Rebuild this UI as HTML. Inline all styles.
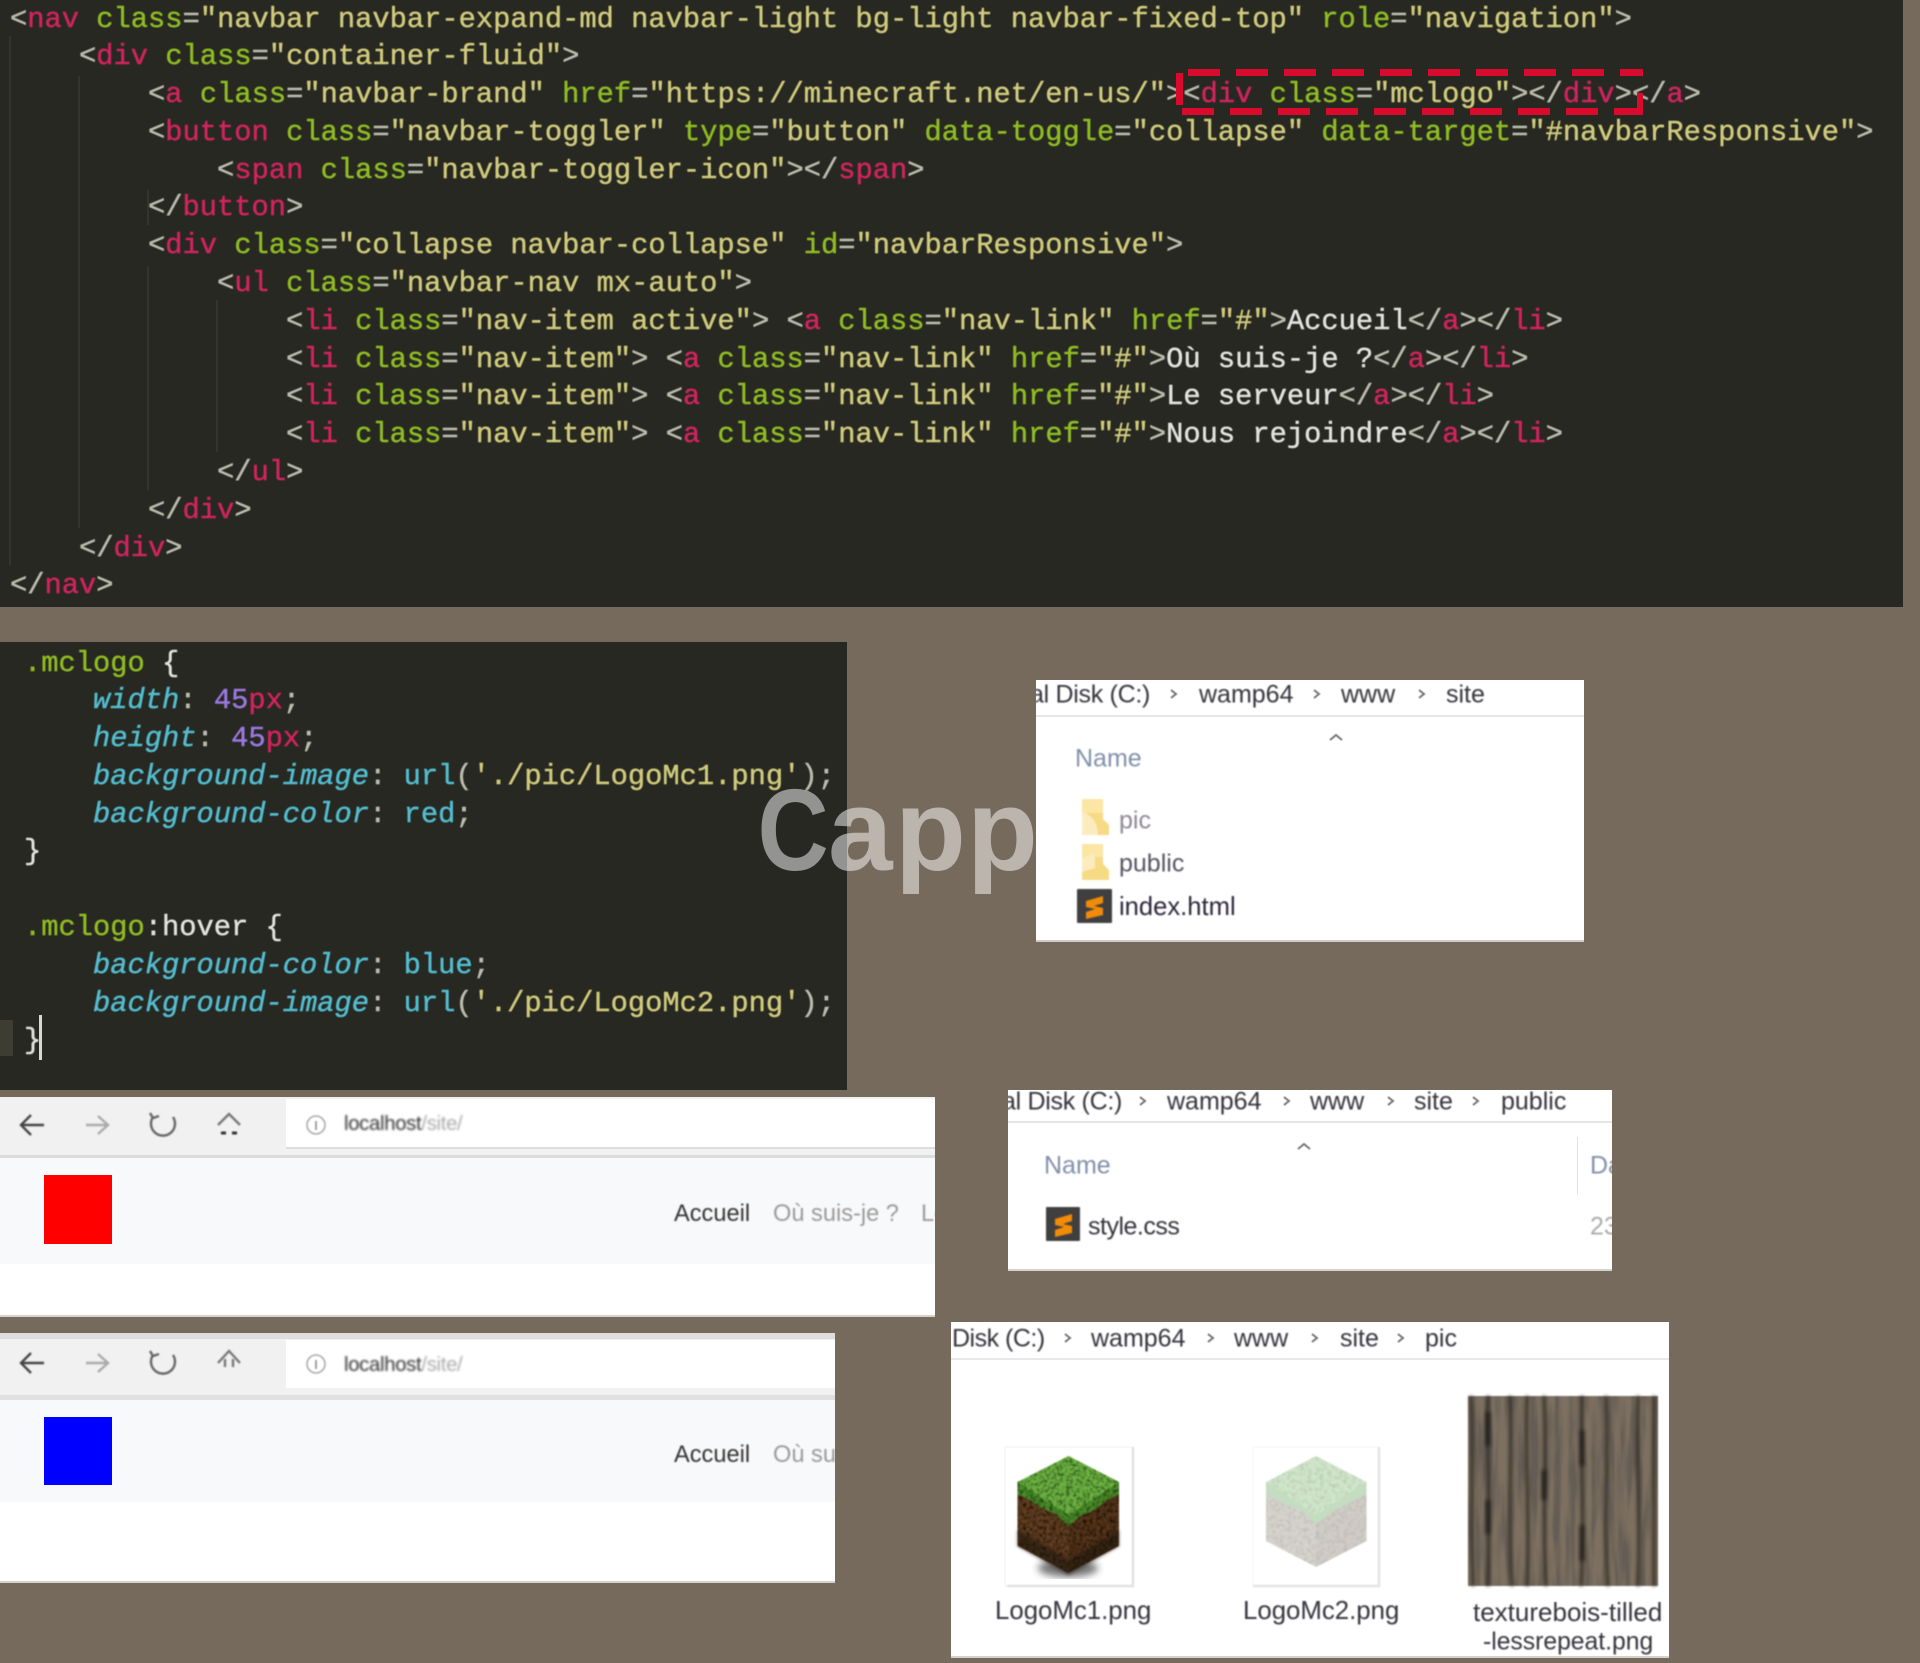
<!DOCTYPE html>
<html><head><meta charset="utf-8"><title>Navbar Minecraft</title>
<style>
html,body{margin:0;padding:0;background:#766a5c}
#r{position:relative;width:1920px;height:1663px;overflow:hidden;background:#766a5c;font-family:"Liberation Sans",sans-serif}
.b{position:absolute}
pre{position:absolute;margin:0;font:28.75px/37.8px "Liberation Mono",monospace;color:#cfcfc8;filter:blur(.6px);-webkit-text-stroke:.45px currentColor}
i.g{font-style:normal;color:#d0245f}
i.a{font-style:normal;color:#8fbc24}
i.s{font-style:normal;color:#d0ca7c}
i.e{font-style:normal;color:#bcbcae}
i.w{font-style:normal;color:#e2e2dc}
i.c{font-style:italic;color:#53bccf}
i.u{font-style:normal;color:#53bccf}
i.n{font-style:normal;color:#9a78e0}
i.k{font-style:normal;color:#8fbb22}
.t{position:absolute;white-space:nowrap;line-height:1;transform:translateY(calc(-50% + 1px));font-size:25px;color:#33333b;filter:blur(.7px)}
.m{color:#7f8ea8}
.clip{position:absolute;overflow:hidden}
.nav{font-size:23.6px;filter:blur(.8px)}
.url{font-size:20.3px;filter:blur(1px);color:#333;letter-spacing:-.3px}
.url span{color:#aaa}
</style></head><body><div id="r">

<div class="b" style="left:0;top:0;width:1903px;height:607px;background:#272822"></div>
<svg class="b" style="left:0;top:0" width="1903" height="607">
<g stroke="#33342d" stroke-width="2">
<path d="M10 36V566M79 76V528M148 190V225M148 266V490M217 300V452"/></g></svg>
<pre style="left:10px;top:.5px"><i class="e">&lt;</i><i class="g">nav</i> <i class="a">class</i><i class="e">=</i><i class="s">"navbar navbar-expand-md navbar-light bg-light navbar-fixed-top"</i> <i class="a">role</i><i class="e">=</i><i class="s">"navigation"</i><i class="e">&gt;</i>
    <i class="e">&lt;</i><i class="g">div</i> <i class="a">class</i><i class="e">=</i><i class="s">"container-fluid"</i><i class="e">&gt;</i>
        <i class="e">&lt;</i><i class="g">a</i> <i class="a">class</i><i class="e">=</i><i class="s">"navbar-brand"</i> <i class="a">href</i><i class="e">=</i><i class="s">"https://minecraft.net/en-us/"</i><i class="e">&gt;&lt;</i><i class="g">div</i> <i class="a">class</i><i class="e">=</i><i class="s">"mclogo"</i><i class="e">&gt;&lt;/</i><i class="g">div</i><i class="e">&gt;&lt;/</i><i class="g">a</i><i class="e">&gt;</i>
        <i class="e">&lt;</i><i class="g">button</i> <i class="a">class</i><i class="e">=</i><i class="s">"navbar-toggler"</i> <i class="a">type</i><i class="e">=</i><i class="s">"button"</i> <i class="a">data-toggle</i><i class="e">=</i><i class="s">"collapse"</i> <i class="a">data-target</i><i class="e">=</i><i class="s">"#navbarResponsive"</i><i class="e">&gt;</i>
            <i class="e">&lt;</i><i class="g">span</i> <i class="a">class</i><i class="e">=</i><i class="s">"navbar-toggler-icon"</i><i class="e">&gt;&lt;/</i><i class="g">span</i><i class="e">&gt;</i>
        <i class="e">&lt;/</i><i class="g">button</i><i class="e">&gt;</i>
        <i class="e">&lt;</i><i class="g">div</i> <i class="a">class</i><i class="e">=</i><i class="s">"collapse navbar-collapse"</i> <i class="a">id</i><i class="e">=</i><i class="s">"navbarResponsive"</i><i class="e">&gt;</i>
            <i class="e">&lt;</i><i class="g">ul</i> <i class="a">class</i><i class="e">=</i><i class="s">"navbar-nav mx-auto"</i><i class="e">&gt;</i>
                <i class="e">&lt;</i><i class="g">li</i> <i class="a">class</i><i class="e">=</i><i class="s">"nav-item active"</i><i class="e">&gt;</i> <i class="e">&lt;</i><i class="g">a</i> <i class="a">class</i><i class="e">=</i><i class="s">"nav-link"</i> <i class="a">href</i><i class="e">=</i><i class="s">"#"</i><i class="e">&gt;</i><i class="w">Accueil</i><i class="e">&lt;/</i><i class="g">a</i><i class="e">&gt;&lt;/</i><i class="g">li</i><i class="e">&gt;</i>
                <i class="e">&lt;</i><i class="g">li</i> <i class="a">class</i><i class="e">=</i><i class="s">"nav-item"</i><i class="e">&gt;</i> <i class="e">&lt;</i><i class="g">a</i> <i class="a">class</i><i class="e">=</i><i class="s">"nav-link"</i> <i class="a">href</i><i class="e">=</i><i class="s">"#"</i><i class="e">&gt;</i><i class="w">Où suis-je ?</i><i class="e">&lt;/</i><i class="g">a</i><i class="e">&gt;&lt;/</i><i class="g">li</i><i class="e">&gt;</i>
                <i class="e">&lt;</i><i class="g">li</i> <i class="a">class</i><i class="e">=</i><i class="s">"nav-item"</i><i class="e">&gt;</i> <i class="e">&lt;</i><i class="g">a</i> <i class="a">class</i><i class="e">=</i><i class="s">"nav-link"</i> <i class="a">href</i><i class="e">=</i><i class="s">"#"</i><i class="e">&gt;</i><i class="w">Le serveur</i><i class="e">&lt;/</i><i class="g">a</i><i class="e">&gt;&lt;/</i><i class="g">li</i><i class="e">&gt;</i>
                <i class="e">&lt;</i><i class="g">li</i> <i class="a">class</i><i class="e">=</i><i class="s">"nav-item"</i><i class="e">&gt;</i> <i class="e">&lt;</i><i class="g">a</i> <i class="a">class</i><i class="e">=</i><i class="s">"nav-link"</i> <i class="a">href</i><i class="e">=</i><i class="s">"#"</i><i class="e">&gt;</i><i class="w">Nous rejoindre</i><i class="e">&lt;/</i><i class="g">a</i><i class="e">&gt;&lt;/</i><i class="g">li</i><i class="e">&gt;</i>
            <i class="e">&lt;/</i><i class="g">ul</i><i class="e">&gt;</i>
        <i class="e">&lt;/</i><i class="g">div</i><i class="e">&gt;</i>
    <i class="e">&lt;/</i><i class="g">div</i><i class="e">&gt;</i>
<i class="e">&lt;/</i><i class="g">nav</i><i class="e">&gt;</i></pre>

<svg class="b" style="left:0;top:0" width="1903" height="130" fill="#d90a2c">
<path d="M1188 69h32v7h-32zM1236 69h32v7h-32zM1284 69h32v7h-32zM1332 69h32v7h-32zM1380 69h32v7h-32zM1428 69h32v7h-32zM1476 69h32v7h-32zM1524 69h32v7h-32zM1572 69h32v7h-32zM1620 69h23v7h-23z"/>
<path d="M1182 108h32v7h-32zM1230 108h32v7h-32zM1278 108h32v7h-32zM1326 108h32v7h-32zM1374 108h32v7h-32zM1422 108h32v7h-32zM1470 108h32v7h-32zM1518 108h32v7h-32zM1566 108h32v7h-32zM1614 108h29v7h-29z"/>
<path d="M1176 73h7v32h-7zM1637 93h6v22h-6z"/></svg>

<div class="b" style="left:0;top:642px;width:847px;height:448px;background:#272822"></div>
<div class="b" style="left:0;top:1020px;width:13px;height:36px;background:#3e3d32"></div>
<div class="b" style="left:39px;top:1015px;width:3px;height:45px;background:#d8d8d0"></div>
<pre style="left:24px;top:644.5px"><i class="k">.mclogo</i> <i class="w">{</i>
    <i class="c">width</i><i class="e">:</i> <i class="n">45</i><i class="g">px</i><i class="e">;</i>
    <i class="c">height</i><i class="e">:</i> <i class="n">45</i><i class="g">px</i><i class="e">;</i>
    <i class="c">background-image</i><i class="e">:</i> <i class="u">url</i><i class="e">(</i><i class="s">'./pic/LogoMc1.png'</i><i class="e">);</i>
    <i class="c">background-color</i><i class="e">:</i> <i class="u">red</i><i class="e">;</i>
<i class="w">}</i>

<i class="k">.mclogo</i><i class="w">:hover {</i>
    <i class="c">background-color</i><i class="e">:</i> <i class="u">blue</i><i class="e">;</i>
    <i class="c">background-image</i><i class="e">:</i> <i class="u">url</i><i class="e">(</i><i class="s">'./pic/LogoMc2.png'</i><i class="e">);</i>
<i class="w">}</i></pre>

<!-- explorer 1 -->
<div class="clip" style="left:1036px;top:680px;width:548px;height:262px;background:#fff;box-shadow:inset 0 -2px 0 #cfcbc6">
<div class="b" style="left:0;top:35px;width:548px;height:2px;background:#e6e6e6"></div>
</div>
<div class="clip" style="left:1036px;top:680px;width:548px;height:36px">
<span class="t" style="left:-6px;top:14px;letter-spacing:-.3px">al Disk (C:)</span>
<span class="t" style="left:163px;top:14px">wamp64</span>
<span class="t" style="left:305px;top:14px">www</span>
<span class="t" style="left:410px;top:14px">site</span>
</div>
<svg class="b" style="left:1036px;top:680px;filter:blur(.6px)" width="548" height="100" fill="none" stroke="#777" stroke-width="2">
<path d="M135 10l5 4-5 4M278 10l5 4-5 4M383 10l5 4-5 4M294 60l6-5 6 5"/></svg>
<span class="t m" style="left:1075px;top:758px">Name</span>
<svg class="b" style="left:1077px;top:795px;filter:blur(.7px)" width="40" height="132">
<path d="M5 4H26V24L32 30V40H5Z" fill="#f6da84"/><path d="M5 4H26V18H5Z" fill="#fbe6a4"/>
<path d="M5 17C14 19 21 28 21 40H5Z" fill="#fbecc0"/>
<path d="M5 49H26V69L32 75V85H5Z" fill="#f6da84"/><path d="M5 49H26V62H5Z" fill="#fbe6a4"/>
<path d="M5 63L18 58V73L5 77Z" fill="#fbecc0"/>
<rect x="0" y="94" width="35" height="34" rx="1" fill="#3f3f3f"/>
<path d="M9 106L26 101V108L17 111L26 113V120L9 124V117L18 114L9 112Z" fill="#f28c08"/>
</svg>
<span class="t" style="left:1119px;top:820px;color:#8c8794">pic</span>
<span class="t" style="left:1119px;top:863px;color:#555260">public</span>
<span class="t" style="left:1119px;top:907px;color:#2a2438;font-size:25.6px">index.html</span>

<!-- explorer 2 -->
<div class="b" style="left:1008px;top:1090px;width:604px;height:181px;background:#fff;box-shadow:inset 0 -2px 0 #d5d2cd">
<div class="b" style="left:0;top:31px;width:604px;height:2px;background:#e6e6e6"></div>
<div class="b" style="left:569px;top:47px;width:1px;height:58px;background:#e2e2e2"></div>
</div>
<div class="clip" style="left:1008px;top:1090px;width:604px;height:31px">
<span class="t" style="left:-6px;top:11px;letter-spacing:-.3px">al Disk (C:)</span>
<span class="t" style="left:159px;top:11px">wamp64</span>
<span class="t" style="left:302px;top:11px">www</span>
<span class="t" style="left:406px;top:11px">site</span>
<span class="t" style="left:493px;top:11px">public</span>
</div>
<svg class="b" style="left:1008px;top:1090px;filter:blur(.6px)" width="604" height="80" fill="none" stroke="#777" stroke-width="2">
<path d="M132 7l5 4-5 4M276 7l5 4-5 4M380 7l5 4-5 4M465 7l5 4-5 4M290 59l6-5 6 5"/></svg>
<span class="t m" style="left:1044px;top:1165px">Name</span>
<div class="clip" style="left:1585px;top:1150px;width:27px;height:90px">
<span class="t m" style="left:5px;top:15px">Da</span>
<span class="t" style="left:5px;top:76px;color:#aaa">23</span>
</div>
<svg class="b" style="left:1046px;top:1207px;filter:blur(.7px)" width="36" height="36">
<rect x="0" y="0" width="34" height="34" rx="1" fill="#3f3f3f"/>
<path d="M9 12L26 7V14L17 17L26 19V26L9 30V23L18 20L9 18Z" fill="#f28c08"/></svg>
<span class="t" style="left:1088px;top:1226px;letter-spacing:-.5px">style.css</span>

<!-- explorer 3 -->
<div class="b" style="left:951px;top:1322px;width:718px;height:336px;background:#fff;box-shadow:inset 0 -2px 0 #d5d2cd">
<div class="b" style="left:0;top:36px;width:718px;height:2px;background:#e8e8e8"></div>
</div>
<div class="clip" style="left:951px;top:1322px;width:718px;height:36px">
<span class="t" style="left:1px;top:16px;letter-spacing:-.5px">Disk (C:)</span>
<span class="t" style="left:140px;top:16px">wamp64</span>
<span class="t" style="left:283px;top:16px">www</span>
<span class="t" style="left:389px;top:16px">site</span>
<span class="t" style="left:474px;top:16px">pic</span>
</div>
<svg class="b" style="left:951px;top:1322px;filter:blur(.6px)" width="718" height="36" fill="none" stroke="#777" stroke-width="2">
<path d="M114 12l5 4-5 4M257 12l5 4-5 4M361 12l5 4-5 4M447 12l5 4-5 4"/></svg>

<svg class="b" style="left:951px;top:1322px" width="718" height="336" viewBox="951 1322 718 336">
<defs>
<filter id="n" x="0" y="0" width="100%" height="100%">
<feTurbulence type="fractalNoise" baseFrequency=".3" numOctaves="2" seed="4"/>
<feColorMatrix values="0 0 0 0 0 0 0 0 0 0 0 0 0 0 0 0 0 0 2.2 -.85" result="a"/>
<feComposite in="a" in2="SourceGraphic" operator="in" result="b"/>
<feMerge><feMergeNode in="SourceGraphic"/><feMergeNode in="b"/></feMerge>
</filter>
<filter id="nl" x="0" y="0" width="100%" height="100%">
<feTurbulence type="fractalNoise" baseFrequency=".25" numOctaves="2" seed="9"/>
<feColorMatrix values="0 0 0 0 .4 0 0 0 0 .38 0 0 0 0 .36 0 0 0 1.2 -.5" result="a"/>
<feComposite in="a" in2="SourceGraphic" operator="in" result="b"/>
<feMerge><feMergeNode in="SourceGraphic"/><feMergeNode in="b"/></feMerge>
</filter>
<filter id="wd" x="0" y="0" width="100%" height="100%">
<feTurbulence type="fractalNoise" baseFrequency=".13 .012" numOctaves="3" seed="8"/>
<feColorMatrix values="0 0 0 0 .13 0 0 0 0 .11 0 0 0 0 .09 0 0 0 3.4 -1.35" result="a"/>
<feComposite in="a" in2="SourceGraphic" operator="in" result="b"/>
<feMerge><feMergeNode in="SourceGraphic"/><feMergeNode in="b"/></feMerge>
</filter>
<filter id="bl"><feGaussianBlur stdDeviation="1.6"/></filter>
<filter id="bs"><feGaussianBlur stdDeviation="4"/></filter>
<filter id="b1"><feGaussianBlur stdDeviation=".7"/></filter>
</defs>
<!-- thumbs -->
<path d="M1005 1447H1133V1586H1005Z" fill="none" stroke="#f2f2f2" stroke-width="1"/>
<path d="M1253 1447H1379V1586H1253Z" fill="none" stroke="#f4f4f4" stroke-width="1"/>
<path d="M1133 1447V1586H1007" fill="none" stroke="#e2e2e2" stroke-width="2.5" filter="url(#b1)"/>
<path d="M1379 1447V1586H1253" fill="none" stroke="#e4e4e4" stroke-width="2.5" filter="url(#b1)"/>
<!-- grass block -->
<ellipse cx="1068" cy="1568" rx="30" ry="9" fill="#000" opacity=".55" filter="url(#bs)"/>
<g filter="url(#b1)">
<path d="M1017.5 1482L1068.5 1515V1573L1017.5 1546Z" fill="#5e3c22" filter="url(#n)"/>
<path d="M1119 1482L1068.5 1515V1573L1119 1546Z" fill="#52341d" filter="url(#n)"/>
<path d="M1017.5 1530L1068.5 1560V1575L1017.5 1546Z" fill="#1c120a" opacity=".6" filter="url(#bl)"/>
<path d="M1119 1530L1068.5 1560V1575L1119 1546Z" fill="#1c120a" opacity=".6" filter="url(#bl)"/>
<path d="M1017.5 1482V1494L1030 1500L1042 1508L1056 1514L1068.5 1526L1080 1516L1094 1510L1107 1500L1119 1494V1482Z" fill="#4a8a2c" filter="url(#n)"/>
<path d="M1068.5 1456L1119 1482L1068.5 1515L1017.5 1482Z" fill="#6cb242" filter="url(#n)"/>
</g>
<!-- pale block -->
<g filter="url(#b1)">
<path d="M1266 1482L1316 1515V1567L1266 1541Z" fill="#d6d2cc" filter="url(#nl)"/>
<path d="M1366.5 1482L1316 1515V1567L1366.5 1541Z" fill="#d0ccc6" filter="url(#nl)"/>
<path d="M1266 1482V1494L1285 1504L1300 1510L1316 1524L1335 1510L1350 1503L1366.5 1494V1482Z" fill="#c4dcc0"/>
<path d="M1316 1456L1366.5 1482L1316 1515L1266 1482Z" fill="#cfe6c9" filter="url(#nl)"/>
</g>
<!-- wood -->
<g filter="url(#b1)">
<rect x="1468" y="1396" width="190" height="190" fill="#7d7061" filter="url(#wd)"/>
<path d="M1471 1396C1474 1450 1470 1500 1473 1586M1488 1396C1486 1440 1491 1500 1488 1586M1510 1396C1512 1450 1508 1520 1512 1586M1527 1396C1525 1460 1530 1520 1527 1586M1544 1396C1547 1460 1542 1520 1546 1586M1582 1396C1580 1450 1585 1520 1581 1586M1606 1396C1609 1460 1603 1520 1608 1586M1638 1396C1636 1450 1641 1520 1638 1586M1654 1396V1586" stroke="#2d2924" stroke-width="3.5" fill="none" opacity=".85" filter="url(#bl)"/>
<path d="M1488 1412v34M1488 1500v34M1582 1430v36M1582 1525v36M1544 1470v30" stroke="#191612" stroke-width="5" fill="none" opacity=".7" filter="url(#bl)"/>
</g>
</svg>
<span class="t" style="left:995px;top:1611px;font-size:25.8px">LogoMc1.png</span>
<span class="t" style="left:1243px;top:1611px;font-size:25.8px">LogoMc2.png</span>
<span class="t" style="left:1473px;top:1611px;font-size:26px">texturebois-tilled</span>
<span class="t" style="left:1483px;top:1642px;font-size:24.7px">-lessrepeat.png</span>

<!-- browser 1 -->
<div class="clip" style="left:0;top:1097px;width:935px;height:220px;background:#fff;box-shadow:inset 0 -2px 0 #d5d2cd">
<div class="b" style="left:0;top:0;width:935px;height:59px;background:#f1f1f1"></div>
<div class="b" style="left:286px;top:2px;width:649px;height:48px;background:#fff"></div>
<div class="b" style="left:286px;top:50px;width:649px;height:2px;background:#ddd"></div>
<div class="b" style="left:0;top:58px;width:935px;height:3px;background:#dcdcdc"></div>
<div class="b" style="left:0;top:61px;width:935px;height:106px;background:#f8f9fa"></div>
<div class="b" style="left:44px;top:78px;width:68px;height:69px;background:#f00"></div>
<span class="t nav" style="left:674px;top:116.5px;color:#333">Accueil</span>
<span class="t nav" style="left:773px;top:116.5px;color:#9a9a9a">Où suis-je ?</span>
<span class="t nav" style="left:921px;top:116.5px;color:#9a9a9a">Le serveur</span>
<span class="t url" style="left:344px;top:26px">localhost<span>/site/</span></span>
<svg class="b" style="left:0;top:0;filter:blur(.8px)" width="340" height="60" fill="none" stroke="#555" stroke-width="2.4">
<path d="M44 28H22M31 18L21 28L31 38" stroke="#444"/>
<path d="M86 28H108M98 19L108 28L98 37" stroke="#aaa"/>
<path d="M173 20A12 12 0 1 1 153 20" stroke="#666"/><path d="M150 16L153 21L159 19" stroke="#666"/>
<path d="M218 28L229 17L240 28" stroke="#777"/><path d="M221 36h5M232 36h5" stroke="#333" stroke-width="3"/>
<circle cx="316" cy="28" r="9" stroke="#aaa" stroke-width="1.6"/><path d="M316 24v9" stroke="#888" stroke-width="1.6"/>
</svg>
</div>

<!-- browser 2 -->
<div class="clip" style="left:0;top:1333px;width:835px;height:250px;background:#fff;box-shadow:inset 0 -2px 0 #d5d2cd">
<div class="b" style="left:0;top:0;width:835px;height:66px;background:#f1f1f1"></div>
<div class="b" style="left:0;top:0;width:835px;height:6px;background:#dedede"></div>
<div class="b" style="left:286px;top:7px;width:549px;height:48px;background:#fff"></div>
<div class="b" style="left:0;top:62px;width:835px;height:5px;background:#e0e0e0"></div>
<div class="b" style="left:0;top:67px;width:835px;height:102px;background:#f8f9fa"></div>
<div class="b" style="left:44px;top:84px;width:68px;height:68px;background:#00f"></div>
<span class="t nav" style="left:674px;top:121.5px;color:#333">Accueil</span>
<span class="t nav" style="left:773px;top:121.5px;color:#9a9a9a">Où suis-je ?</span>
<span class="t url" style="left:344px;top:31px">localhost<span>/site/</span></span>
<svg class="b" style="left:0;top:0;filter:blur(.8px)" width="340" height="60" fill="none" stroke="#555" stroke-width="2.4">
<path d="M44 30H22M31 20L21 30L31 40" stroke="#444"/>
<path d="M86 30H108M98 21L108 30L98 39" stroke="#aaa"/>
<path d="M173 22A12 12 0 1 1 153 22" stroke="#666"/><path d="M150 18L153 23L159 21" stroke="#666"/>
<path d="M218 30L229 18L240 30M225 26V34M233 26V34" stroke="#777"/>
<circle cx="316" cy="31" r="9" stroke="#aaa" stroke-width="1.6"/><path d="M316 27v9" stroke="#888" stroke-width="1.6"/>
</svg>
</div>

<!-- watermark -->
<svg class="b" style="left:0;top:0" width="1920" height="1663" font-family="Liberation Sans, sans-serif" font-weight="700" font-size="116" fill="#fff" fill-opacity=".5">
<text transform="translate(757.5,870) scale(.85,1)">C</text>
<text x="828 895 967" y="870">app</text>
</svg>
</div></body></html>
